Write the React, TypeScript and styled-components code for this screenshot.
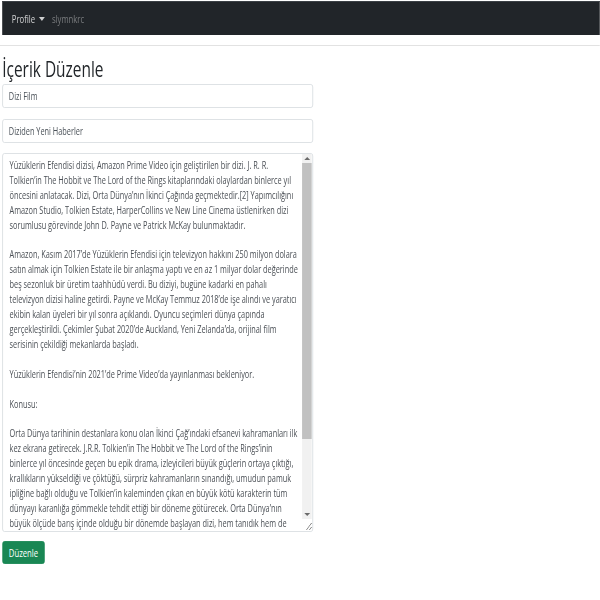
import React from "react";
import styled, { createGlobalStyle } from "styled-components";

/* The reference is a horizontally condensed rendering of the page.
   The whole page is laid out at a wider size and condensed with one
   scaleX on the viewport; every horizontal value below is pre-scale. */
const K = 0.735;

const Global = createGlobalStyle`
  html, body { margin: 0; padding: 0; background: #fff; overflow: hidden; }
  body { font-family: "Open Sans", Lato, sans-serif; color: #212529; }
  * { box-sizing: border-box; }
`;

const Viewport = styled.div`
  width: ${600 / K}px;
  transform: scaleX(${K});
  transform-origin: 0 0;
  padding-top: 1px;
`;

const Navbar = styled.nav`
  margin-left: 3px;
  height: 34px;
  background: #212529;
  border-top: 1px solid #3b4045;
  display: flex;
  align-items: center;
  padding: 0 13px;
  gap: 10px;
`;

const NavToggle = styled.span`
  display: inline-flex;
  align-items: center;
  gap: 5px;
  color: rgba(255, 255, 255, 0.78);
  font-size: 10.5px;
`;

const Caret = styled.span`
  width: 0;
  height: 0;
  border-left: 4px solid transparent;
  border-right: 4px solid transparent;
  border-top: 4px solid rgba(255, 255, 255, 0.78);
`;

const NavUser = styled.span`
  color: rgba(255, 255, 255, 0.38);
  font-size: 10.5px;
`;

const Divider = styled.hr`
  margin: 10px 0 0 0;
  border: 0;
  border-top: 1px solid #e2e2e2;
`;

const Main = styled.main`
  padding: 11px 0 0 3px;
  width: ${316 / K}px;
  display: flex;
  flex-direction: column;
`;

const Title = styled.h1`
  margin: 0 0 3px 0;
  font-size: 21px;
  font-weight: 400;
  line-height: 24px;
  color: #212529;
`;

const Input = styled.input`
  height: 24px;
  width: ${311 / K}px;
  border: 1px solid #d9dde1;
  border-radius: 3px;
  padding: 0 8px;
  font-family: inherit;
  font-size: 10px;
  color: #495057;
  margin-bottom: 11px;
  outline: none;
  &:last-of-type { margin-bottom: 10px; }
`;

const TextWrap = styled.div`
  position: relative;
  width: ${311 / K}px;
  height: 379px;
`;

const TextArea = styled.textarea`
  display: block;
  width: 100%;
  height: 100%;
  border: 1px solid #d9dde1;
  border-radius: 3px;
  padding: 4px 16px 4px 9px;
  font-family: inherit;
  font-size: 10px;
  line-height: 14.9px;
  color: #4a4f55;
  resize: vertical;
  outline: none;
  white-space: pre;
  overflow: hidden;
`;

const ScrollBar = styled.div`
  position: absolute;
  top: 1px;
  right: 2px;
  bottom: 13px;
  width: 13px;
  background: #f1f1f1;
  display: flex;
  flex-direction: column;
  align-items: center;
  pointer-events: none;
`;

const Arrow = styled.div<{ $down?: boolean }>`
  height: 9px;
  flex: none;
  display: flex;
  align-items: center;
  justify-content: center;
  &::after {
    content: "";
    width: 0;
    height: 0;
    border-left: 4px solid transparent;
    border-right: 4px solid transparent;
    ${(p) => (p.$down ? "border-top" : "border-bottom")}: 3px solid #6b6b6b;
  }
`;

const Rail = styled.div`
  flex: 1;
  width: 100%;
  display: flex;
  flex-direction: column;
`;

const Thumb = styled.div`
  height: 276px;
  width: 100%;
  background: #c1c1c1;
`;

const Button = styled.button`
  margin-top: 9px;
  align-self: flex-start;
  height: 23px;
  padding: 0 8px;
  background: #198754;
  border: 1px solid #198754;
  border-radius: 3px;
  color: #fff;
  font-family: inherit;
  font-size: 10.5px;
`;

const content = [
  "Yüzüklerin Efendisi dizisi, Amazon Prime Video için geliştirilen bir dizi. J. R. R.",
  "Tolkien’in The Hobbit ve The Lord of the Rings kitaplarındaki olaylardan binlerce yıl",
  "öncesini anlatacak. Dizi, Orta Dünya’nın İkinci Çağında geçmektedir.[2] Yapımcılığını",
  "Amazon Studio, Tolkien Estate, HarperCollins ve New Line Cinema üstlenirken dizi",
  "sorumlusu görevinde John D. Payne ve Patrick McKay bulunmaktadır.",
  "",
  "Amazon, Kasım 2017’de Yüzüklerin Efendisi için televizyon hakkını 250 milyon dolara",
  "satın almak için Tolkien Estate ile bir anlaşma yaptı ve en az 1 milyar dolar değerinde",
  "beş sezonluk bir üretim taahhüdü verdi. Bu diziyi, bugüne kadarki en pahalı",
  "televizyon dizisi haline getirdi. Payne ve McKay Temmuz 2018’de işe alındı ve yaratıcı",
  "ekibin kalan üyeleri bir yıl sonra açıklandı. Oyuncu seçimleri dünya çapında",
  "gerçekleştirildi. Çekimler Şubat 2020’de Auckland, Yeni Zelanda’da, orijinal film",
  "serisinin çekildiği mekanlarda başladı.",
  "",
  "Yüzüklerin Efendisi’nin 2021’de Prime Video’da yayınlanması bekleniyor.",
  "",
  "Konusu:",
  "",
  "Orta Dünya tarihinin destanlara konu olan İkinci Çağ’ındaki efsanevi kahramanları ilk",
  "kez ekrana getirecek. J.R.R. Tolkien’in The Hobbit ve The Lord of the Rings’inin",
  "binlerce yıl öncesinde geçen bu epik drama, izleyicileri büyük güçlerin ortaya çıktığı,",
  "krallıkların yükseldiği ve çöktüğü, sürpriz kahramanların sınandığı, umudun pamuk",
  "ipliğine bağlı olduğu ve Tolkien’in kaleminden çıkan en büyük kötü karakterin tüm",
  "dünyayı karanlığa gömmekle tehdit ettiği bir döneme götürecek. Orta Dünya’nın",
  "büyük ölçüde barış içinde olduğu bir dönemde başlayan dizi, hem tanıdık hem de",
  "yeni karakterlerden oluşan bir topluluğu, Orta Dünya’da yeniden ortaya çıkan",
  "kötülüğe karşı verdikleri mücadelede takip ediyor. Dağların karanlık derinliklerinden",
  "elf başkenti Lindon’un görkemli ormanlarına, Númenor’un nefes kesici ada",
  "krallığından haritanın en uzak köşelerine kadar uzanan bu krallıklar ve karakterler,",
  "kendilerinden sonra uzun süre yaşayacak mirasları oyacak.",
].join("\n");

export default function App() {
  return (
    <Viewport>
      <Global />
      <Navbar>
        <NavToggle>
          Profile
          <Caret />
        </NavToggle>
        <NavUser>slymnkrc</NavUser>
      </Navbar>
      <Divider />
      <Main>
        <Title>İçerik Düzenle</Title>
        <Input defaultValue="Dizi Film" />
        <Input defaultValue="Diziden Yeni Haberler" />
        <TextWrap>
          <TextArea defaultValue={content} spellCheck={false} />
          <ScrollBar>
            <Arrow />
            <Rail>
              <Thumb />
            </Rail>
            <Arrow $down />
          </ScrollBar>
        </TextWrap>
        <Button>Düzenle</Button>
      </Main>
    </Viewport>
  );
}
